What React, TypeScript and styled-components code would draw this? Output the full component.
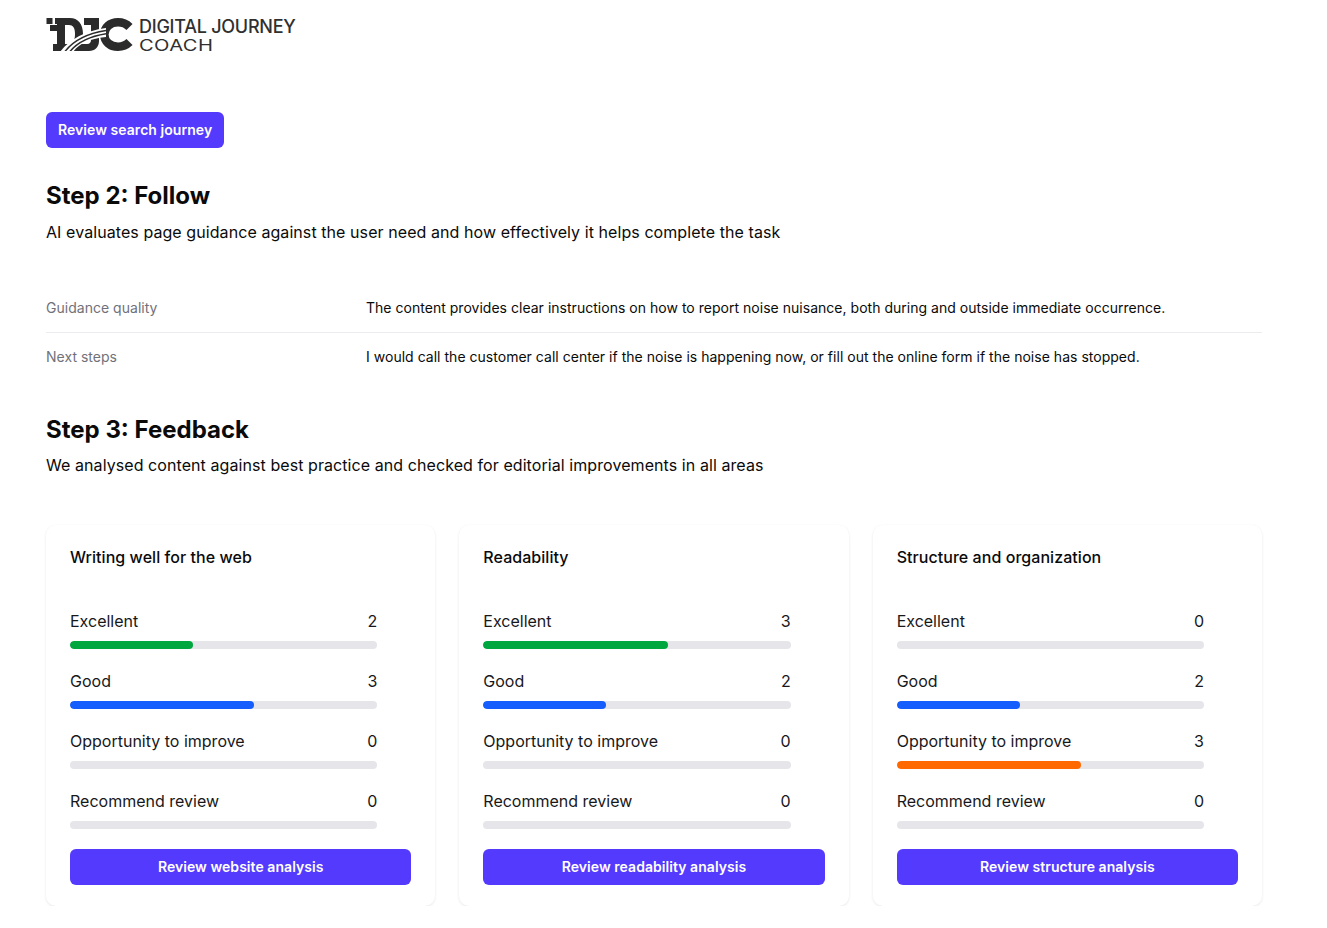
import React from "react";
import styled, { createGlobalStyle } from "styled-components";

const Global = createGlobalStyle`
  html, body { margin: 0; padding: 0; background: #fff; }
  body { font-family: Inter, "Liberation Sans", sans-serif; color: #0a0a0a; }
`;

const Page = styled.main`
  width: 1216px;
  padding: 16px 0 0 46px;
  display: flex;
  flex-direction: column;
  align-items: stretch;
`;

const Header = styled.header`
  display: flex;
  align-items: center;
  gap: 6px;
  height: 36px;
`;

const Wordmark = styled.div`
  display: flex;
  flex-direction: column;
  align-items: flex-start;
  padding-top: 3px;
  color: #303030;
`;

const WordTop = styled.span`
  font-size: 18px;
  line-height: 19px;
  font-weight: 500;
  letter-spacing: -0.25px;
`;

const WordBottom = styled.span`
  display: inline-block;
  margin: 1px 0 0 0;
  font-size: 15.5px;
  line-height: 17px;
  font-weight: 400;
  letter-spacing: 0.3px;
  transform: scaleX(1.3);
  transform-origin: left center;
`;

const PrimaryLink = styled.a<{ $block?: boolean }>`
  display: flex;
  align-items: center;
  justify-content: center;
  align-self: ${(p) => (p.$block ? "stretch" : "flex-start")};
  height: 36px;
  padding: 0 12px 2px;
  box-sizing: border-box;
  border-radius: 6px;
  background: #533afd;
  color: #fff;
  font-size: 14px;
  font-weight: 600;
  letter-spacing: 0.05px;
  white-space: nowrap;
`;

const TopAction = styled.div`
  display: flex;
  margin-top: 60px;
`;

const Heading = styled.h2<{ $top: number }>`
  margin: ${(p) => p.$top}px 0 0;
  font-size: 24px;
  line-height: 32px;
  font-weight: 700;
  color: #0a0a0a;
`;

const Lead = styled.p<{ $top: number }>`
  margin: ${(p) => p.$top}px 0 0;
  font-size: 16px;
  line-height: 24px;
  letter-spacing: 0.075px;
  color: #0a0a0a;
`;

const Details = styled.dl`
  margin: 40px 0 0;
  display: flex;
  flex-direction: column;
`;

const DetailRow = styled.div<{ $divider?: boolean }>`
  display: grid;
  grid-template-columns: 320px 1fr;
  height: 49px;
  box-sizing: border-box;
  padding-top: 14px;
  font-size: 14px;
  line-height: 20px;
  letter-spacing: 0.022px;
  border-bottom: ${(p) => (p.$divider ? "1px solid #ececee" : "none")};
`;

const DetailLabel = styled.dt`
  color: #71717a;
`;

const DetailValue = styled.dd`
  margin: 0;
  color: #0a0a0a;
`;

const Cards = styled.section`
  margin-top: 48px;
  display: grid;
  grid-template-columns: repeat(3, 1fr);
  gap: 24px;
`;

const Card = styled.article`
  display: flex;
  flex-direction: column;
  box-sizing: border-box;
  height: 381px;
  padding: 20px 24px 20px;
  border-radius: 10px;
  background: #fff;
  box-shadow: 0 1px 3px rgba(0, 0, 0, 0.09), 0 0 1px rgba(0, 0, 0, 0.02);
`;

const CardTitle = styled.h3`
  margin: 0 0 40px;
  font-size: 16px;
  line-height: 24px;
  font-weight: 500;
  letter-spacing: 0.05px;
  color: #0a0a0a;
`;

const Metrics = styled.div`
  display: flex;
  flex-direction: column;
  gap: 20px;
  width: calc(100% - 34px);
  margin-bottom: 20px;
`;

const Metric = styled.div`
  display: flex;
  flex-direction: column;
  gap: 8px;
`;

const MetricHead = styled.div`
  display: flex;
  justify-content: space-between;
  font-size: 16px;
  line-height: 24px;
  color: #18181b;
`;

const Track = styled.div`
  height: 8px;
  border-radius: 4px;
  background: #e5e5ea;
  overflow: hidden;
`;

const tones = { green: "#00a63e", blue: "#155dfc", orange: "#ff6900" };

const Fill = styled.div<{ $tone: keyof typeof tones }>`
  height: 100%;
  border-radius: 4px;
  background: ${(p) => tones[p.$tone]};
`;

type Row = { label: string; value: number; tone: keyof typeof tones };

const mk = (a: number, b: number, c: number, d: number): Row[] => [
  { label: "Excellent", value: a, tone: "green" },
  { label: "Good", value: b, tone: "blue" },
  { label: "Opportunity to improve", value: c, tone: "orange" },
  { label: "Recommend review", value: d, tone: "orange" },
];

const cards = [
  { title: "Writing well for the web", action: "Review website analysis", rows: mk(2, 3, 0, 0) },
  { title: "Readability", action: "Review readability analysis", rows: mk(3, 2, 0, 0) },
  { title: "Structure and organization", action: "Review structure analysis", rows: mk(0, 2, 3, 0) },
];

const Logo = () => (
  <svg width="87" height="33" viewBox="0 0 87 33" aria-hidden="true">
    <g fill="#2b2b2b">
      <rect x="0.5" y="0" width="6" height="6" />
      <path
        fillRule="evenodd"
        d="M9 0H24C32 0 37 6 37 16C37 26 32 33 24 33H7V26H11V13H4V7H11V6H9ZM19 7V26H23C27 26 29 22 29 16C29 10 27 7 23 7Z"
      />
      <path d="M38 0H53V23C53 29 49 33 43 33H28V26H41C44 26 45 24 45 22V7H38Z" />
    </g>
    <path
      d="M72 4.3C76.5 4.3 80.5 6 83.5 9M83.5 24C80.5 27 76.5 28.7 72 28.7C64 28.7 58.3 23.5 58.3 16.5C58.3 9.5 64 4.3 72 4.3"
      fill="none"
      stroke="#2b2b2b"
      strokeWidth="8.6"
    />
    <path d="M14 34C23 22 38 13 60 10L60 19C42 21 33 26 27 34Z" fill="#fff" />
    <g fill="none" stroke="#2b2b2b" strokeWidth="1.5">
      <path d="M19 33.5C27 23 41 15.5 60 12.5" />
      <path d="M24 33.5C31 25 43 18.5 60 15.8" />
    </g>
  </svg>
);

export default function App() {
  return (
    <>
      <Global />
      <Page>
        <Header>
          <Logo />
          <Wordmark>
            <WordTop>DIGITAL JOURNEY</WordTop>
            <WordBottom>COACH</WordBottom>
          </Wordmark>
        </Header>
        <TopAction>
          <PrimaryLink>Review search journey</PrimaryLink>
        </TopAction>
        <Heading $top={32}>Step 2: Follow</Heading>
        <Lead $top={8}>AI evaluates page guidance against the user need and how effectively it helps complete the task</Lead>
        <Details>
          <DetailRow $divider>
            <DetailLabel>Guidance quality</DetailLabel>
            <DetailValue>The content provides clear instructions on how to report noise nuisance, both during and outside immediate occurrence.</DetailValue>
          </DetailRow>
          <DetailRow>
            <DetailLabel>Next steps</DetailLabel>
            <DetailValue>I would call the customer call center if the noise is happening now, or fill out the online form if the noise has stopped.</DetailValue>
          </DetailRow>
        </Details>
        <Heading $top={32}>Step 3: Feedback</Heading>
        <Lead $top={7}>We analysed content against best practice and checked for editorial improvements in all areas</Lead>
        <Cards>
          {cards.map((c) => (
            <Card key={c.title}>
              <CardTitle>{c.title}</CardTitle>
              <Metrics>
                {c.rows.map((r) => (
                  <Metric key={r.label}>
                    <MetricHead>
                      <span>{r.label}</span>
                      <span>{r.value}</span>
                    </MetricHead>
                    <Track>
                      <Fill $tone={r.tone} style={{ width: `${(r.value / 5) * 100}%` }} />
                    </Track>
                  </Metric>
                ))}
              </Metrics>
              <PrimaryLink $block>{c.action}</PrimaryLink>
            </Card>
          ))}
        </Cards>
      </Page>
    </>
  );
}
